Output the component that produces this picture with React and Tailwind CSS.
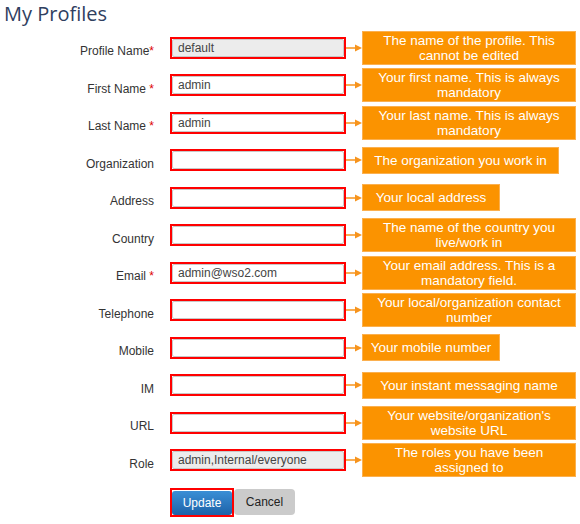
const rows = [
  { label: 'Profile Name', req: 'tight', value: 'default', ro: true, note: 'The name of the profile. This cannot be edited', w: 'w-[214px]' },
  { label: 'First Name', req: 'space', value: 'admin', note: 'Your first name. This is always mandatory', w: 'w-[214px]' },
  { label: 'Last Name', req: 'space', value: 'admin', note: 'Your last name. This is always mandatory', w: 'w-[214px]' },
  { label: 'Organization', value: '', note: 'The organization you work in', w: 'w-[197px]', one: true },
  { label: 'Address', value: '', note: 'Your local address', w: 'w-[138px]', one: true },
  { label: 'Country', value: '', note: 'The name of the country you live/work in', w: 'w-[214px]' },
  { label: 'Email', req: 'space', value: 'admin@wso2.com', note: 'Your email address. This is a mandatory field.', w: 'w-[214px]' },
  { label: 'Telephone', value: '', note: 'Your local/organization contact number', w: 'w-[214px]' },
  { label: 'Mobile', value: '', note: 'Your mobile number', w: 'w-[138px]', one: true },
  { label: 'IM', value: '', note: 'Your instant messaging name', w: 'w-[214px]', one: true },
  { label: 'URL', value: '', note: "Your website/organization's website URL", w: 'w-[214px]' },
  { label: 'Role', value: 'admin,Internal/everyone', ro: true, note: 'The roles you have been assigned to', w: 'w-[214px]' },
];

function Arrow() {
  return (
    <svg width="16" height="10" viewBox="0 0 16 10" className="shrink-0">
      <line x1="0" y1="5" x2="10" y2="5" stroke="#f7941d" strokeWidth="1.5" />
      <polygon points="9,1.5 16,5 9,8.5" fill="#f7941d" />
    </svg>
  );
}

function Row({ r }) {
  return (
    <div className="flex h-[37.5px] items-center">
      <div className="w-[154px] pt-[7px] text-right text-[12px] text-[#333]">
        {r.label}
        {r.req === 'tight' && <span className="text-[#d00]">*</span>}
        {r.req === 'space' && <span className="text-[#d00]"> *</span>}
      </div>
      <div className="ml-[16px] h-[22px] w-[176px] border-2 border-[#ff0000]">
        <div className={`flex h-full items-center rounded-[2px] border border-[#c8c8c8] px-[5px] text-[12px] text-[#444] ${r.ro ? 'bg-[#ececec]' : 'bg-white'}`}>
          {r.value}
        </div>
      </div>
      <Arrow />
      <div
        className={`${r.w} ${r.one ? 'h-[27px] whitespace-nowrap px-[4px]' : 'h-[34px] px-[11px]'} flex items-center justify-center border border-[#fbb04f] bg-[#fb9300] text-center text-[13.5px] leading-[15px] text-white`}
      >
        {r.note}
      </div>
    </div>
  );
}

export default function App() {
  return (
    <div className="h-[524px] w-[580px] bg-white font-['Liberation_Sans',Arial,sans-serif]">
      <h1 className="h-[28.75px] pl-[4px] pt-[2px] font-['Open_Sans',sans-serif] text-[20px] leading-[24px] text-[#2f4060]">
        My Profiles
      </h1>
      <div>
        {rows.map((r) => (
          <Row key={r.label} r={r} />
        ))}
      </div>
      <div className="ml-[170px] mt-[9px] flex items-center">
        <div className="border-2 border-[#ff0000]">
          <button className="h-[24px] w-[60px] rounded-[3px] bg-gradient-to-b from-[#3a8fd6] to-[#1d62a8] text-[12px] text-white">
            Update
          </button>
        </div>
        <button className="h-[26px] w-[61px] rounded-[4px] bg-[#cbcbcb] text-[12px] text-[#222]">Cancel</button>
      </div>
    </div>
  );
}
